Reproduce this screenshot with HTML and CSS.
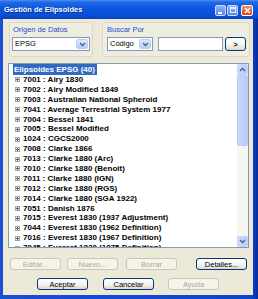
FILE: index.html
```html
<!DOCTYPE html>
<html>
<head>
<meta charset="utf-8">
<link rel="stylesheet" href="styles.css">
</head>
<body>
<div class="window">
  <div class="titlebar">
    <span class="title">Gestión de Elipsoides</span>
    <div class="tbtns">
      <span class="tb tb-min"><span class="bar"></span></span>
      <span class="tb tb-max"><span class="box"></span></span>
      <span class="tb tb-close"><svg width="7" height="7" viewBox="0 0 7 7"><path d="M1 1L6 6M6 1L1 6" stroke="#fff" stroke-width="1.6"/></svg></span>
    </div>
  </div>
  <div class="client">
    <div class="toprow">
      <div class="group g1">
        <div class="glabel">Origen de Datos</div>
        <div class="combo c-epsg"><span class="ctext">EPSG</span><span class="drop"><svg width="7" height="5" viewBox="0 0 7 5"><path d="M1 1L3.5 3.5L6 1" fill="none" stroke="#4D6185" stroke-width="1.4"/></svg></span></div>
      </div>
      <div class="group g2">
        <div class="glabel">Buscar Por</div>
        <div class="srow">
          <div class="combo c-cod"><span class="ctext">Código</span><span class="drop"><svg width="7" height="5" viewBox="0 0 7 5"><path d="M1 1L3.5 3.5L6 1" fill="none" stroke="#4D6185" stroke-width="1.4"/></svg></span></div>
          <div class="input"></div>
          <div class="btn go">&gt;</div>
        </div>
      </div>
    </div>
    <div class="list">
      <div class="items">
        <div class="head"><span class="sel">Elipsoides EPSG (40)</span></div>
        <div class="row"><span class="plus"></span>7001 : Airy 1830</div>
        <div class="row"><span class="plus"></span>7002 : Airy Modified 1849</div>
        <div class="row"><span class="plus"></span>7003 : Australian National Spheroid</div>
        <div class="row"><span class="plus"></span>7041 : Average Terrestrial System 1977</div>
        <div class="row"><span class="plus"></span>7004 : Bessel 1841</div>
        <div class="row"><span class="plus"></span>7005 : Bessel Modified</div>
        <div class="row"><span class="plus"></span>1024 : CGCS2000</div>
        <div class="row"><span class="plus"></span>7008 : Clarke 1866</div>
        <div class="row"><span class="plus"></span>7013 : Clarke 1880 (Arc)</div>
        <div class="row"><span class="plus"></span>7010 : Clarke 1880 (Benoit)</div>
        <div class="row"><span class="plus"></span>7011 : Clarke 1880 (IGN)</div>
        <div class="row"><span class="plus"></span>7012 : Clarke 1880 (RGS)</div>
        <div class="row"><span class="plus"></span>7014 : Clarke 1880 (SGA 1922)</div>
        <div class="row"><span class="plus"></span>7051 : Danish 1876</div>
        <div class="row"><span class="plus"></span>7015 : Everest 1830 (1937 Adjustment)</div>
        <div class="row"><span class="plus"></span>7044 : Everest 1830 (1962 Definition)</div>
        <div class="row"><span class="plus"></span>7016 : Everest 1830 (1967 Definition)</div>
        <div class="row"><span class="plus"></span>7045 : Everest 1830 (1975 Definition)</div>
      </div>
      <div class="vscroll">
        <span class="sarrow"><svg width="7" height="5" viewBox="0 0 7 5"><path d="M1 4L3.5 1.5L6 4" fill="none" stroke="#4D6185" stroke-width="1.4"/></svg></span>
        <span class="thumb"></span>
        <span class="track"></span>
        <span class="sarrow"><svg width="7" height="5" viewBox="0 0 7 5"><path d="M1 1L3.5 3.5L6 1" fill="none" stroke="#4D6185" stroke-width="1.4"/></svg></span>
      </div>
    </div>
    <div class="brow1">
      <div class="btn dis b-edit">Editar...</div>
      <div class="btn dis b-new">Nuevo...</div>
      <div class="btn dis b-del">Borrar</div>
      <div class="btn b-det">Detalles...</div>
    </div>
    <div class="brow2">
      <div class="btn b-ok">Aceptar</div>
      <div class="btn b-cancel">Cancelar</div>
      <div class="btn dis b-help">Ayuda</div>
    </div>
  </div>
</div>
</body>
</html>
```

FILE: styles.css
```css
* { box-sizing: border-box; }
html, body { margin: 0; padding: 0; background: #ffffff; }
body { font-family: "Liberation Sans", Arial, sans-serif; font-size: 8px; }

.window {
  width: 258px;
  height: 299px;
  display: flex;
  flex-direction: column;
  background: linear-gradient(90deg, #1a4fd6 0%, #0b44d2 97%, #0a2fa0 100%);
}

.titlebar {
  height: 19px;
  flex: none;
  display: flex;
  align-items: center;
  padding: 0 5px 0 4px;
  background: linear-gradient(#4a8cf0 0%, #1f68e6 12%, #0b57df 45%, #0a52d8 75%, #0742c0 100%);
}
.title {
  color: #fff;
  font-weight: bold;
  font-size: 7.5px;
  text-shadow: 1px 1px 0 #0a2a8a;
  flex: 1;
}
.tbtns { display: flex; gap: 1px; margin-top: 1px; }
.tb {
  width: 11px;
  height: 11px;
  border: 1px solid #ffffff;
  border-radius: 2px;
  display: flex;
  align-items: center;
  justify-content: center;
}
.tb-min, .tb-max { background: linear-gradient(#8fb0f4, #5a85e6); border-color: #cfdcfa; }
.tb-min .bar { width: 4px; height: 2px; background: #fff; margin-top: 5px; margin-right: 2px; }
.tb-max .box { width: 6px; height: 6px; border: 1px solid #e8eefc; border-top-width: 2px; }
.tb-close { margin-left: 2px; width: 12px; background: linear-gradient(#ef8a5e, #d9461e); }

.client {
  flex: 1;
  margin: 0 5px 4px 3px;
  background: #ece9d8;
  padding-top: 3px;
  display: flex;
  flex-direction: column;
}

.toprow { display: flex; height: 35px; }
.group {
  border: 1px solid #dcd9c9;
  border-radius: 3px;
  padding: 2px 2px 5px 2px;
  background: #efede0;
}
.g1 { margin-left: 6px; width: 84px; }
.g2 { margin-left: 9px; width: 148px; padding-left: 4px; }
.glabel {
  height: 10px;
  line-height: 10px;
  font-size: 7.5px;
  color: #1b4bd0;
  padding-left: 1px;
}
.g2 .glabel { padding-left: 0; }

.combo, .input {
  margin-top: 2px;
  height: 14px;
  border: 1px solid #7f9db9;
  background: #fff;
  display: flex;
  align-items: stretch;
}
.c-epsg { width: 78px; }
.c-cod { width: 46px; }
.ctext { flex: 1; line-height: 12px; padding-left: 2px; font-size: 7.5px; color: #000; }
.drop {
  width: 12px;
  margin: 1px;
  border: 1px solid #bcd0f6;
  border-radius: 2px;
  background: linear-gradient(#dde8fe, #b7cbf7);
  display: flex;
  align-items: center;
  justify-content: center;
}
.srow { display: flex; align-items: flex-start; }
.input { width: 65px; margin-left: 5px; }

.btn {
  height: 12px;
  border: 1px solid #003c74;
  border-radius: 3px;
  background: linear-gradient(#ffffff 0%, #f4f3ee 55%, #dcd8cc 100%);
  display: flex;
  align-items: center;
  justify-content: center;
  font-size: 7.5px;
  color: #000;
  width: 51px;
}
.btn.go { width: 21px; height: 14px; margin-left: 2px; margin-top: 2px; font-weight: bold; font-size: 7px; }
.btn.dis {
  border-color: #c9c7ba;
  background: #f5f4ea;
  color: #aca899;
}

.list {
  margin: 6px 0 0 5px;
  width: 241px;
  height: 185px;
  border: 1px solid #7f9db9;
  background: #fff;
  display: flex;
}
.items {
  flex: 1;
  overflow: hidden;
  font-weight: bold;
  font-size: 8px;
  color: #000;
}
.head { height: 11px; padding-left: 4px; }
.sel {
  display: inline-block;
  height: 11px;
  line-height: 11px;
  padding: 0 1px;
  background: #316ac5;
  color: #fff;
  width: 84px;
}
.row {
  height: 9.9px;
  line-height: 9.9px;
  display: flex;
  align-items: center;
  white-space: nowrap;
  padding-left: 6px;
}
.plus {
  width: 5px;
  height: 5px;
  border: 1px solid #a3a3a3;
  margin-right: 3px;
  flex: none;
  background:
    linear-gradient(#606060, #606060) center / 3px 1px no-repeat,
    linear-gradient(#606060, #606060) center / 1px 3px no-repeat,
    #fff;
}
.vscroll {
  width: 11px;
  display: flex;
  flex-direction: column;
  background: #f4f3ef;
}
.sarrow {
  height: 11px;
  border: 1px solid #c3d3fd;
  border-radius: 2px;
  background: linear-gradient(90deg, #cddbfb, #b9cdf7);
  display: flex;
  align-items: center;
  justify-content: center;
  flex: none;
}
.thumb {
  height: 71px;
  border: 1px solid #b7cbf6;
  border-radius: 2px;
  background: linear-gradient(90deg, #cad9fc, #b6cafa);
  flex: none;
}
.track { flex: 1; background: #f6f5f0; }

.brow1 { display: flex; margin-top: 10px; }
.b-edit { margin-left: 7px; }
.b-new { margin-left: 6px; }
.b-del { margin-left: 8px; }
.b-det { margin-left: 19px; }

.brow2 { display: flex; margin-top: 8px; }
.b-ok { margin-left: 34px; }
.b-cancel { margin-left: 15px; }
.b-help { margin-left: 14px; }
```
